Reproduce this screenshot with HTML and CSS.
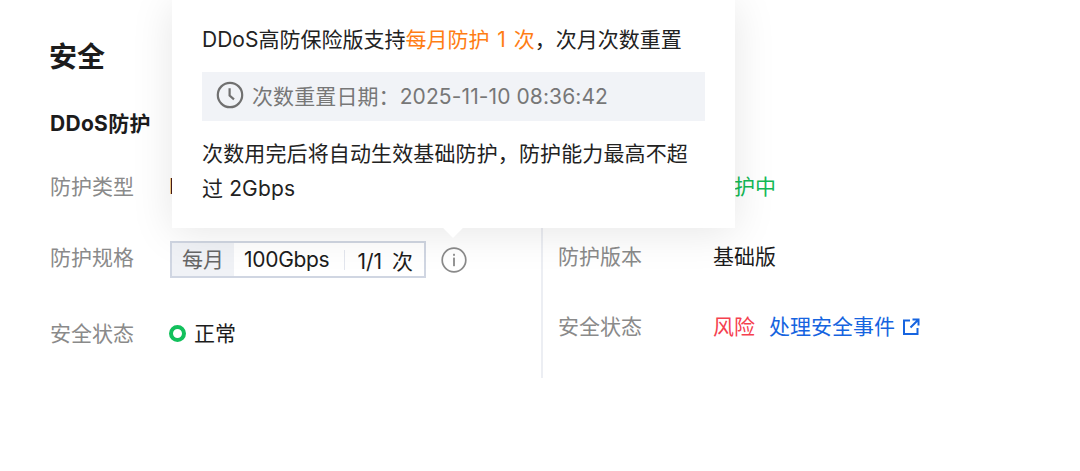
FILE: index.html
```html
<!DOCTYPE html>
<html lang="zh-CN">
<head>
    <meta charset="UTF-8">
    <title>安全</title>
    <link rel="stylesheet" href="styles.css">
</head>
<body>
    <div class="page">
        <h2 class="page-title">安全</h2>
        <div class="columns">
            <div class="col col-left">
                <h3 class="sub-title">DDoS防护</h3>
                <div class="row row-type">
                    <span class="label">防护类型</span>
                    <span class="value">DDoS高防保险版</span>
                </div>
                <div class="row row-spec">
                    <span class="label">防护规格</span>
                    <div class="spec-box">
                        <span class="spec-tag">每月</span>
                        <span class="spec-item spec-speed">100Gbps</span>
                        <span class="spec-sep"></span>
                        <span class="spec-item">1/1 次</span>
                    </div>
                    <div class="info-wrap">
                        <svg class="info-icon" width="26" height="26" viewBox="0 0 26 26" fill="none">
                            <circle cx="13" cy="13" r="11.8" stroke="#8a8a8a" stroke-width="1.7"/>
                            <rect x="12.1" y="6.8" width="1.8" height="2" fill="#8a8a8a"/>
                            <rect x="12.1" y="10.6" width="1.8" height="8.6" fill="#8a8a8a"/>
                        </svg>
                    </div>
                </div>
                <div class="row row-safe">
                    <span class="label">安全状态</span>
                    <span class="status-dot"></span>
                    <span class="value">正常</span>
                </div>
            </div>
            <div class="col col-right">
                <div class="row">
                    <span class="label label-right">防护状态</span>
                    <span class="value green">防护中</span>
                </div>
                <div class="row">
                    <span class="label label-right">防护版本</span>
                    <span class="value">基础版</span>
                </div>
                <div class="row">
                    <span class="label label-right">安全状态</span>
                    <span class="value red">风险</span>
                    <a class="link" href="#">处理安全事件
                        <svg class="link-icon" width="18" height="18" viewBox="0 0 18 18" fill="none">
                            <path d="M8 2.5H2v13.5h13.5V10" stroke="#1664e0" stroke-width="2"/>
                            <path d="M10.5 1.5H16.5V7.5M16 2L8.5 9.5" stroke="#1664e0" stroke-width="2"/>
                        </svg>
                    </a>
                </div>
            </div>
        </div>
    </div>

    <div class="popover">
        <p class="pop-text">DDoS高防保险版支持<span class="orange">每月防护 1 次</span>，次月次数重置</p>
        <div class="pop-date">
            <svg width="28" height="28" viewBox="0 0 28 28" fill="none">
                <circle cx="14" cy="14" r="12.2" stroke="#707070" stroke-width="2.2"/>
                <path d="M13.6 7.2V14.6L18 18.4" stroke="#707070" stroke-width="2.2"/>
            </svg>
            <span class="pop-date-text">次数重置日期：2025-11-10 08:36:42</span>
        </div>
        <p class="pop-text pop-text-wrap">次数用完后将自动生效基础防护，防护能力最高不超过 2Gbps</p>
        <span class="pop-arrow"></span>
    </div>
</body>
</html>
```

FILE: styles.css
```css
* {
    margin: 0;
    padding: 0;
    box-sizing: border-box;
}
body {
    background: #fff;
    color: #1c1c1c;
    font-family: "Inter", "Noto Sans CJK SC", sans-serif;
    font-size: 21px;
}
.page {
    padding: 40px 0 0 50px;
}
.page-title {
    margin-left: -1px;
    font-size: 28px;
    line-height: 34px;
    font-weight: 700;
}
.columns {
    display: flex;
    margin-top: 35px;
}
.col-left {
    width: 491px;
}
.col-right {
    border-left: 2px solid #eceef3;
    height: 269px;
    padding: 61px 0 0 15px;
    display: flex;
    flex-direction: column;
    gap: 40px;
}
.sub-title {
    font-size: 21px;
    line-height: 30px;
    font-weight: 700;
    letter-spacing: 0.3px;
}
.row {
    display: flex;
    align-items: center;
    height: 30px;
}
.row-type {
    margin-top: 31px;
}
.row-type .value {
    margin-left: -1px;
}
.row-spec {
    margin-top: 41px;
}
.row-safe {
    margin-top: 46px;
}
.label {
    width: 120px;
    color: #8a8a8a;
}
.label-right {
    width: 155px;
}
.spec-box {
    display: flex;
    align-items: center;
    width: 256px;
    height: 37px;
    margin-top: 7px;
    border: 2px solid #d0d6e2;
}
.spec-tag {
    width: 62px;
    height: 33px;
    line-height: 33px;
    text-align: center;
    background: #f0f2f6;
    color: #666;
}
.spec-item {
    margin-left: 10px;
    white-space: nowrap;
    word-spacing: 4px;
}
.spec-speed {
    letter-spacing: -0.3px;
}
.spec-sep {
    width: 1px;
    height: 20px;
    margin-left: 15px;
    margin-right: 2px;
    background: #e3e6ee;
}
.info-wrap {
    display: flex;
    margin-top: 7px;
    margin-left: 15px;
}
.status-dot {
    width: 17px;
    height: 17px;
    margin: 2px 8px 0 -1px;
    border: 4px solid #12c05c;
    border-radius: 50%;
}
.green {
    color: #12b955;
}
.red {
    color: #f5414f;
}
.link {
    display: flex;
    align-items: center;
    gap: 7px;
    margin-left: 14px;
    color: #1664e0;
    text-decoration: none;
}
.link-icon {
    margin-top: 3px;
}
.popover {
    position: absolute;
    left: 172px;
    top: 0;
    width: 563px;
    height: 228px;
    padding: 25px 30px 0;
    background: #fff;
    box-shadow: 0 4px 40px rgba(0, 0, 0, 0.1);
}
.pop-text {
    line-height: 30px;
    color: #222;
}
.pop-text-wrap {
    margin-top: 15px;
    margin-right: 14px;
    line-height: 35px;
    letter-spacing: 0.13px;
}
.orange {
    color: #ff7d14;
    word-spacing: 2px;
}
.pop-date {
    display: flex;
    align-items: center;
    gap: 8px;
    height: 49px;
    margin-top: 17px;
    padding: 0 0 4px 14px;
    background: #f1f3f7;
    color: #777;
}
.pop-date-text {
    letter-spacing: 0.1px;
}
.pop-arrow {
    position: absolute;
    left: 274px;
    bottom: -7px;
    width: 14px;
    height: 14px;
    background: #fff;
    transform: rotate(45deg);
}
```
